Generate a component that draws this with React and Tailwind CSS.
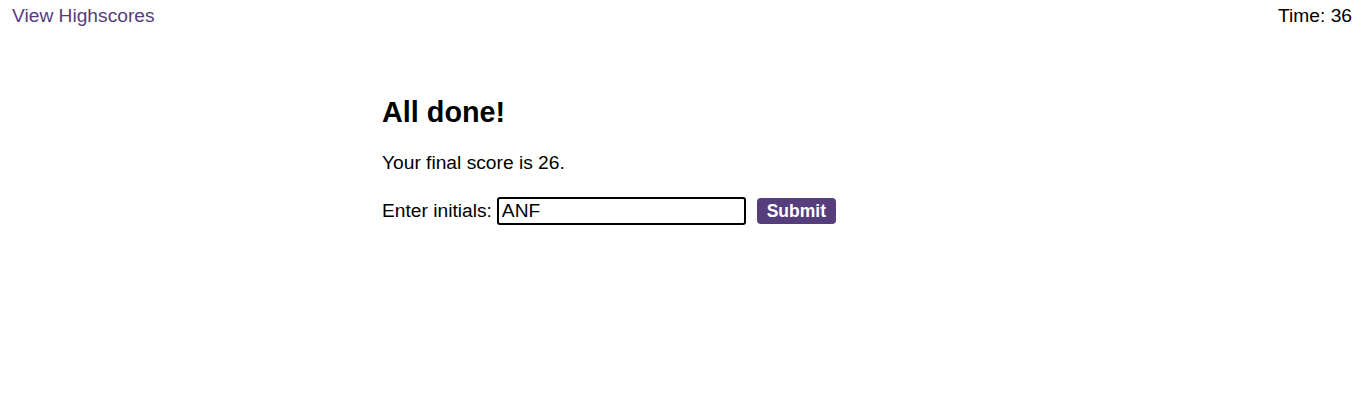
export default function App() {
  return (
    <div className="w-[1362px] h-[412px] bg-white text-black font-['Liberation_Sans',Arial,sans-serif] text-[19.2px] leading-[22px]">
      <header className="flex justify-between items-start pl-3 pr-[10px] pt-[5px]">
        <a className="text-[#563d7c]">View Highscores</a>
        <span>Time: 36</span>
      </header>
      <main className="w-[598px] ml-[382px] mt-[69px]">
        <h1 className="text-[28.8px] leading-[33px] font-bold">All done!</h1>
        <p className="mt-[23px]">Your final score is 26.</p>
        <div className="mt-[23px] flex items-center">
          <label>Enter initials:</label>
          <input
            defaultValue="ANF"
            className="ml-[5px] w-[249px] h-[28px] border-2 border-black rounded-[3px] pl-[3px] text-[19.2px] outline-none"
          />
          <button className="ml-[11px] w-[79px] h-[26px] bg-[#563d7c] text-white rounded-[4px] font-bold text-[17.5px] leading-[26px]">
            Submit
          </button>
        </div>
      </main>
    </div>
  );
}
